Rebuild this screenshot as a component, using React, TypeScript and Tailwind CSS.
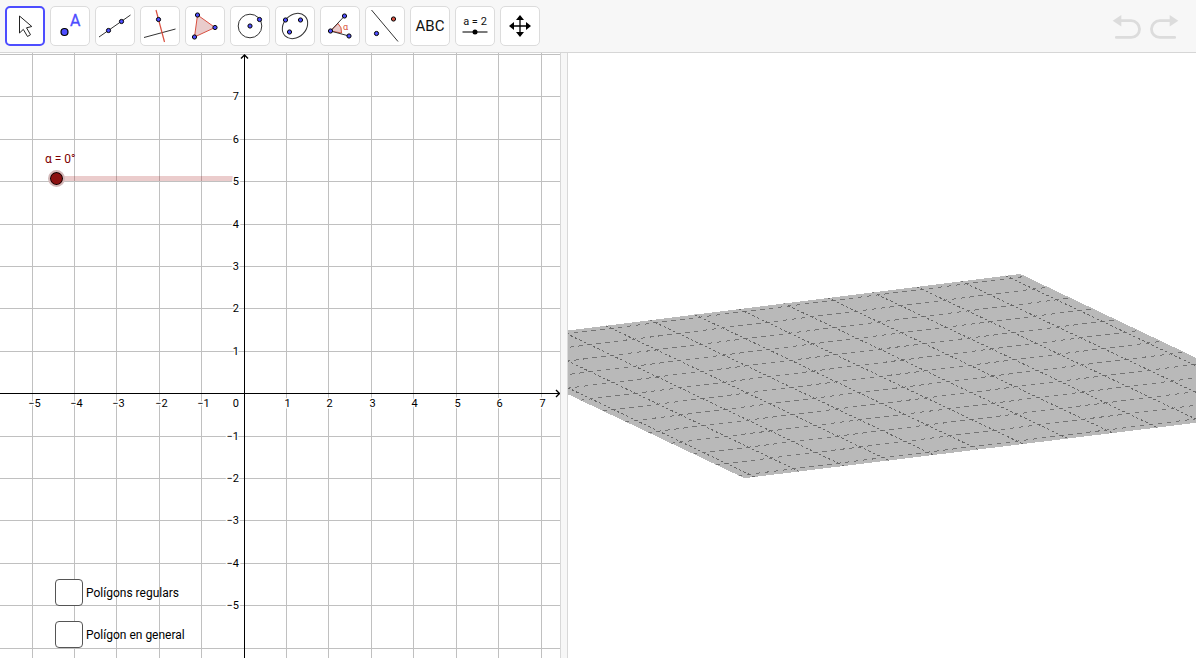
import React, { useState } from "react";

const RANGE_X = [-5, -4, -3, -2, -1, 1, 2, 3, 4, 5, 6, 7];
const RANGE_Y = [-6, -5, -4, -3, -2, -1, 1, 2, 3, 4, 5, 6, 7, 8];
const UNIT = 42.41;
const ORIGIN = { x: 244.15, y: 340.7 };
const minus = (n: number) => (n < 0 ? "−" + -n : String(n));
const gx = (n: number) => Math.floor(ORIGIN.x + n * UNIT) + 0.5;
const gy = (n: number) => Math.floor(ORIGIN.y - n * UNIT) + 0.5;

function Dot({ x, y, r = 2.1, fill = "#4d4dff" }: { x: number; y: number; r?: number; fill?: string }) {
  return <circle cx={x} cy={y} r={r} fill={fill} stroke="#000" strokeWidth="1" />;
}

const thin = { stroke: "#333", strokeWidth: 1, fill: "none" };
const red = { stroke: "#d95040", strokeWidth: 1.2, fill: "none" };
const pink = { stroke: "#d95040", strokeWidth: 1, fill: "#e9cccc" };

const tools: { label: string; icon: React.ReactNode }[] = [
  {
    label: "Mou",
    icon: <path d="M14.5 10v17l3.800-3.600 4.200 7.100 3-1.800-4-6.900 5.300-1.300z" fill="#fff" stroke="#222" strokeWidth="1" />,
  },
  {
    label: "Punt",
    icon: (
      <>
        <circle cx="14.5" cy="26" r="3.5" fill="#4d4dff" stroke="#000" strokeWidth="1.2" />
        <text x="20" y="20" fontSize="16" fill="#4d4dff" stroke="#4d4dff" strokeWidth="0.3">A</text>
      </>
    ),
  },
  {
    label: "Recta",
    icon: (
      <>
        <path d="M4 31 35.5 9" {...thin} />
        <Dot x={13.5} y={24.5} />
        <Dot x={26.5} y={15.5} />
      </>
    ),
  },
  {
    label: "Recta perpendicular",
    icon: (
      <>
        <path d="M4 31.5 35.5 23" {...thin} />
        <path d="M16 4l8.500 32" {...red} />
        <Dot x={18.5} y={13.5} />
      </>
    ),
  },
  {
    label: "Polígon",
    icon: (
      <>
        <path d="M12.5 9 30 21.5 9.500 31z" {...pink} />
        <Dot x={12.5} y={9} />
        <Dot x={30} y={21.5} />
        <Dot x={9.5} y={31} />
      </>
    ),
  },
  {
    label: "Circumferència",
    icon: (
      <>
        <circle cx="20" cy="20" r="11.8" {...thin} />
        <Dot x={20} y={20} />
        <Dot x={29.5} y={13.5} />
      </>
    ),
  },
  {
    label: "El·lipse",
    icon: (
      <>
        <ellipse cx="20" cy="20" rx="14" ry="11.2" transform="rotate(-45 20 20)" {...thin} />
        <Dot x={10.5} y={14} />
        <Dot x={25.5} y={14} />
        <Dot x={14.5} y={26} />
      </>
    ),
  },
  {
    label: "Angle",
    icon: (
      <>
        <path d="M10.500 25l7.500-7.500a11 11 0 0 1 3.500 9.500z" {...pink} />
        <path d="M24.5 10 10.5 25 29 30" {...thin} />
        <Dot x={24.5} y={10} />
        <Dot x={10.5} y={25} />
        <Dot x={29} y={30} />
        <text x="23" y="24" fontSize="9" fill="#d95040">α</text>
      </>
    ),
  },
  {
    label: "Simetria axial",
    icon: (
      <>
        <path d="M6.500 4 33 35.500" {...thin} />
        <Dot x={28.5} y={13} fill="#d95040" />
        <Dot x={11.5} y={27.5} />
      </>
    ),
  },
  { label: "Text", icon: <text x="20" y="25" fontSize="15" textAnchor="middle" fill="#111">ABC</text> },
  {
    label: "Punt lliscant",
    icon: (
      <>
        <text x="20" y="19" fontSize="11" textAnchor="middle" fill="#111">a = 2</text>
        <path d="M7.500 26h25" stroke="#333" strokeWidth="1.3" />
        <circle cx="20" cy="26" r="2.5" />
      </>
    ),
  },
  {
    label: "Desplaça la vista gràfica",
    icon: (
      <>
        <path d="M20 13v14M13 20h14" stroke="#000" strokeWidth="1.3" />
        <path d="M20 9l4 5h-8zM20 31l4-5h-8zM9 20l5-4v8zM31 20l-5-4v8z" />
      </>
    ),
  },
];

function Toolbar() {
  const [active, setActive] = useState(0);
  return (
    <header className="flex h-[53px] shrink-0 items-start justify-between border-b border-[#d6d6d6] bg-[#f7f7f7] pt-[6px] pr-[17px] pl-[5px]">
      <nav className="flex gap-[5px]">
        {tools.map((t, i) => (
          <button
            key={t.label}
            type="button"
            aria-label={t.label}
            onClick={() => setActive(i)}
            className={
              "grid size-10 place-items-center rounded-[5px] bg-white " +
              (i === active ? "border-2 border-[#4d4dff]" : "border border-[#dcdcdc]")
            }
          >
            <svg width="36" height="36" viewBox="2 2 36 36">{t.icon}</svg>
          </button>
        ))}
      </nav>
      <div className="flex gap-1 pt-[6px]">
        <button type="button" aria-label="Desfés" className="size-8">
          <svg width="32" height="32" viewBox="0 0 32 32">
            <path d="M8 8.700h12.200a8.350 8.350 0 0 1 0 16.700H5.300" fill="none" stroke="#dcdcdc" strokeWidth="2.8" strokeLinecap="round" />
            <path d="M1.700 8.700 10.300 3v11.400z" fill="#dcdcdc" />
          </svg>
        </button>
        <button type="button" aria-label="Refés" className="size-8">
          <svg width="32" height="32" viewBox="0 0 32 32">
            <path d="M24 8.700H12.800a8.350 8.350 0 0 0 0 16.700h14.900" fill="none" stroke="#dcdcdc" strokeWidth="2.8" strokeLinecap="round" />
            <path d="M31.300 8.700 22.700 3v11.400z" fill="#dcdcdc" />
          </svg>
        </button>
      </div>
    </header>
  );
}

function Label({ x, y, children, end }: { x: number; y: number; children: string; end?: boolean }) {
  return (
    <text x={x} y={y} textAnchor={end ? "end" : "middle"} fontSize="11" fill="#000" stroke="#fff" strokeWidth="3" paintOrder="stroke">
      {children}
    </text>
  );
}

function GraphicsView() {
  const [angle, setAngle] = useState(0);
  return (
    <section className="relative overflow-hidden bg-white">
      <svg width="100%" height="100%" className="absolute inset-0">
        <g stroke="#c0c0c0" strokeWidth="1">
          {RANGE_X.map((n) => <line key={n} x1={gx(n)} x2={gx(n)} y1="0" y2="100%" />)}
          {RANGE_Y.map((n) => <line key={n} y1={gy(n)} y2={gy(n)} x1="0" x2="100%" />)}
        </g>
      </svg>
      <div className="absolute top-[98px] left-[45px] flex flex-col">
        <label htmlFor="alpha" className="text-[12px] leading-4 text-[#7d0000]">α = {angle}°</label>
        <div className="relative flex h-[23px] items-center">
          <div className="ml-[11px] h-[5px] w-[183px] rounded-r-full bg-[#990000]/20" />
          <input
            id="alpha"
            type="range"
            min="0"
            max="360"
            value={angle}
            onChange={(e) => setAngle(Number(e.target.value))}
            className="absolute left-[3px] h-[17px] w-[198px] appearance-none bg-transparent [&::-webkit-slider-thumb]:size-[17px] [&::-webkit-slider-thumb]:appearance-none [&::-webkit-slider-thumb]:rounded-full [&::-webkit-slider-thumb]:border-2 [&::-webkit-slider-thumb]:border-[#d3b9b9] [&::-webkit-slider-thumb]:bg-[#8b1010] [&::-webkit-slider-thumb]:shadow-[inset_0_0_0_1px_#000]"
          />
        </div>
      </div>
      <svg width="100%" height="100%" className="pointer-events-none absolute inset-0">
        {RANGE_X.map((n) => <Label key={n} x={n < 0 ? gx(n) + 2 : gx(n) + 1} y={354}>{minus(n)}</Label>)}
        {RANGE_Y.filter((n) => n > -6 && n < 8).map((n) => (
          <Label key={n} x={239} y={gy(n) + 3.5} end>{minus(n)}</Label>
        ))}
        <Label x={239} y={354} end>0</Label>
        <g stroke="#000" fill="none">
          <path d="M0 340.500h559.500M244.500 2v700" />
          <path d="M556 337l3.500 3.500-3.500 3.500M241 5.500l3.500-3.500 3.500 3.500" strokeWidth="1.4" />
        </g>
      </svg>
      <div className="absolute top-[526px] left-[55px] flex flex-col gap-[15px]">
        {["Polígons regulars", "Polígon en general"].map((t) => (
          <label key={t} className="flex items-center gap-[3px] text-[12px] leading-4 text-black">
            <input type="checkbox" className="h-[27px] w-7 appearance-none rounded-[4px] border border-[#555] bg-white checked:bg-[#8b1010]" />
            {t}
          </label>
        ))}
      </div>
    </section>
  );
}

/* Corners of the unit grid on the xy plane, in view coordinates */
const C = { nw: [-89.9, 292], ne: [443, 225.2], sw: [181, 421.3], se: [717, 354.9] };
function node(s: number, t: number) {
  return [0, 1].map((k) => (1 - t) * ((1 - s) * C.nw[k] + s * C.ne[k]) + t * ((1 - s) * C.sw[k] + s * C.se[k]));
}
const STEPS = Array.from({ length: 13 }, (_, i) => i / 12);
const PLANE = "M-110 291.300 450 221.300h3L736.500 356.500 182 424.500h-7L-110 289z";

/* One grid line running a cell past both ends; ten dash units make a cell */
function GridLine({ from, to }: { from: number[]; to: number[] }) {
  return <line x1={from[0]} y1={from[1]} x2={to[0]} y2={to[1]} pathLength="140" strokeDasharray="1 1" strokeDashoffset="0.5" />;
}

function View3D() {
  return (
    <section className="relative overflow-hidden bg-white">
      <svg width="100%" height="100%" className="absolute inset-0" shapeRendering="crispEdges">
        <clipPath id="plane">
          <path d={PLANE} />
        </clipPath>
        <path d={PLANE} fill="#b9b9b9" />
        <g clipPath="url(#plane)" strokeWidth="1">
          <g stroke="#747474">
            {STEPS.map((k) => <GridLine key={k} from={node(-1 / 12, k)} to={node(13 / 12, k)} />)}
          </g>
          <g stroke="#666">
            {STEPS.map((k) => <GridLine key={k} from={node(k, -1 / 12)} to={node(k, 13 / 12)} />)}
          </g>
        </g>
      </svg>
    </section>
  );
}

export default function App() {
  return (
    <div className="h-screen bg-white pr-[2px] pb-[2px] font-['Roboto',sans-serif]">
      <div className="flex h-full flex-col">
        <Toolbar />
        <main className="grid min-h-0 flex-1 grid-cols-[560fr_8px_628fr]">
          <GraphicsView />
          <div className="border-x border-[#d8d8d8] bg-[#f7f7f7]" />
          <View3D />
        </main>
      </div>
    </div>
  );
}
